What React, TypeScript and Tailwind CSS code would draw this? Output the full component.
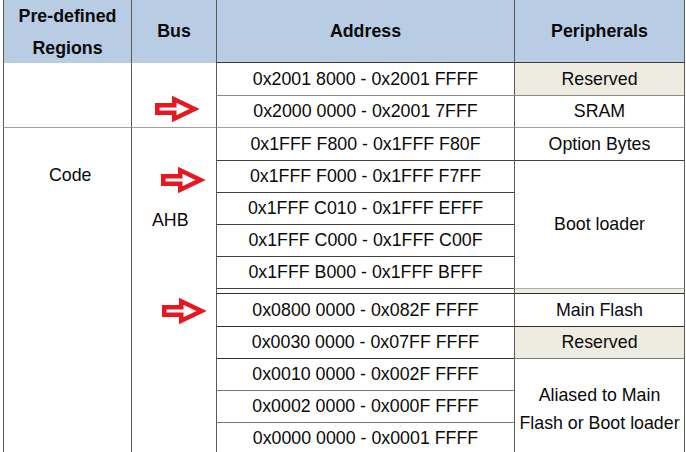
import React from 'react';

const LINE_V = 'border-l border-l-[#5a5a5a]';
const ADDR_TOP = [
  '0x2001 8000 - 0x2001 FFFF',
  '0x2000 0000 - 0x2001 7FFF',
];
const ADDR_CODE = [
  '0x1FFF F800 - 0x1FFF F80F',
  '0x1FFF F000 - 0x1FFF F7FF',
  '0x1FFF C010 - 0x1FFF EFFF',
  '0x1FFF C000 - 0x1FFF C00F',
  '0x1FFF B000 - 0x1FFF BFFF',
];
const ADDR_FLASH = [
  '0x0800 0000 - 0x082F FFFF',
  '0x0030 0000 - 0x07FF FFFF',
  '0x0010 0000 - 0x002F FFFF',
  '0x0002 0000 - 0x000F FFFF',
  '0x0000 0000 - 0x0001 FFFF',
];

// grid rows of the code block start at 4, of the flash block at 10
const CODE_ROWS = ['row-start-4', 'row-start-5', 'row-start-6', 'row-start-7', 'row-start-8'];
const FLASH_ROWS = ['row-start-10', 'row-start-11', 'row-start-12', 'row-start-13', 'row-start-14'];

function Arrow({ className }: { className?: string }) {
  return (
    <svg width="46" height="24" viewBox="0 0 46 24" className={`overflow-visible shrink-0 ${className ?? ''}`}>
      <polygon
        points="2.25,8.25 19.25,8.25 19.25,2.25 39.5,12 19.25,21.75 19.25,15.75 2.25,15.75"
        fill="#ffffff"
        stroke="#e8161f"
        strokeWidth="4.5"
      />
    </svg>
  );
}

export default function App() {
  return (
    <div className="w-[686px] h-[452px] overflow-hidden bg-white text-[17.8px] text-[#0a0a0a] font-['Liberation_Sans',Arial,sans-serif]">
      <div className="ml-[3px] grid grid-cols-[128px_85px_298px_171px] grid-rows-[63px_33px_32px_33px_32px_32px_32px_32px_5px_33px_32px_32px_32px_32px]">
        {/* header */}
        <div className={`col-start-1 row-start-1 ${LINE_V} bg-[#b8cce4] flex flex-col items-center justify-center font-bold leading-[32px]`}>
          <span>Pre-defined</span>
          <span>Regions</span>
        </div>
        <div className={`col-start-2 row-start-1 ${LINE_V} bg-[#b8cce4] flex items-center justify-center font-bold`}>Bus</div>
        <div className={`col-start-3 row-start-1 ${LINE_V} border-b border-b-[#3a3a3a] bg-[#b8cce4] flex items-center justify-center font-bold`}>Address</div>
        <div className={`col-start-4 row-start-1 ${LINE_V} border-r border-r-[#5a5a5a] border-b border-b-[#3a3a3a] bg-[#b8cce4] flex items-center justify-center font-bold`}>Peripherals</div>

        {/* SRAM block */}
        <div className={`col-start-1 row-start-2 row-span-2 ${LINE_V} border-b border-b-[#a0a0a0]`} />
        <div className={`col-start-2 row-start-2 row-span-2 ${LINE_V} border-b border-b-[#a0a0a0] flex items-start pt-[34px] pl-[23px]`}>
          <Arrow />
        </div>
        {ADDR_TOP.map((a, i) => (
          <div
            key={a}
            className={`col-start-3 ${i === 0 ? 'row-start-2' : 'row-start-3'} ${LINE_V} border-b ${i === 0 ? 'border-b-[#8a8a8a]' : 'border-b-[#a0a0a0]'} flex items-center justify-center`}
          >
            {a}
          </div>
        ))}
        <div className={`col-start-4 row-start-2 ${LINE_V} border-r border-r-[#5a5a5a] border-b border-b-[#8a8a8a] bg-[#eeece1] flex items-center justify-center`}>Reserved</div>
        <div className={`col-start-4 row-start-3 ${LINE_V} border-r border-r-[#5a5a5a] border-b border-b-[#a0a0a0] flex items-center justify-center`}>SRAM</div>

        {/* Code region */}
        <div className={`col-start-1 row-start-4 row-span-11 ${LINE_V} pt-[37px] pl-[45px] leading-[20px]`}>Code</div>
        <div className={`col-start-2 row-start-4 row-span-11 ${LINE_V} flex flex-col items-start pl-[29px]`}>
          <Arrow className="mt-[40px]" />
          <span className="mt-[18px] -ml-[9px] leading-[20px]">AHB</span>
          <Arrow className="mt-[69px] ml-[1px]" />
        </div>
        {ADDR_CODE.map((a, i) => (
          <div
            key={a}
            className={`col-start-3 ${CODE_ROWS[i]} ${LINE_V} border-b border-b-[#404040] flex items-center justify-center`}
          >
            {a}
          </div>
        ))}
        <div className={`col-start-3 row-start-9 ${LINE_V} border-b border-b-[#303030]`} />
        {ADDR_FLASH.map((a, i) => (
          <div
            key={a}
            className={`col-start-3 ${FLASH_ROWS[i]} ${LINE_V} border-b ${i < 2 ? 'border-b-[#303030]' : 'border-b-[#7a7a7a]'} flex items-center justify-center`}
          >
            {a}
          </div>
        ))}

        <div className={`col-start-4 row-start-4 ${LINE_V} border-r border-r-[#5a5a5a] border-b border-b-[#404040] flex items-center justify-center`}>Option Bytes</div>
        <div className={`col-start-4 row-start-5 row-span-4 ${LINE_V} border-r border-r-[#5a5a5a] border-b border-b-[#b0b0a8] flex items-center justify-center`}>Boot loader</div>
        <div className={`col-start-4 row-start-9 ${LINE_V} border-r border-r-[#5a5a5a] border-b border-b-[#303030] bg-[#eeece1]`} />
        <div className={`col-start-4 row-start-10 ${LINE_V} border-r border-r-[#5a5a5a] border-b border-b-[#303030] flex items-center justify-center`}>Main Flash</div>
        <div className={`col-start-4 row-start-11 ${LINE_V} border-r border-r-[#5a5a5a] border-b border-b-[#7a7a7a] bg-[#eeece1] flex items-center justify-center`}>Reserved</div>
        <div className={`col-start-4 row-start-12 row-span-3 ${LINE_V} border-r border-r-[#5a5a5a] flex flex-col items-center justify-start pt-[22px] leading-[28px]`}>
          <span>Aliased to Main</span>
          <span>Flash or Boot loader</span>
        </div>
      </div>
    </div>
  );
}
